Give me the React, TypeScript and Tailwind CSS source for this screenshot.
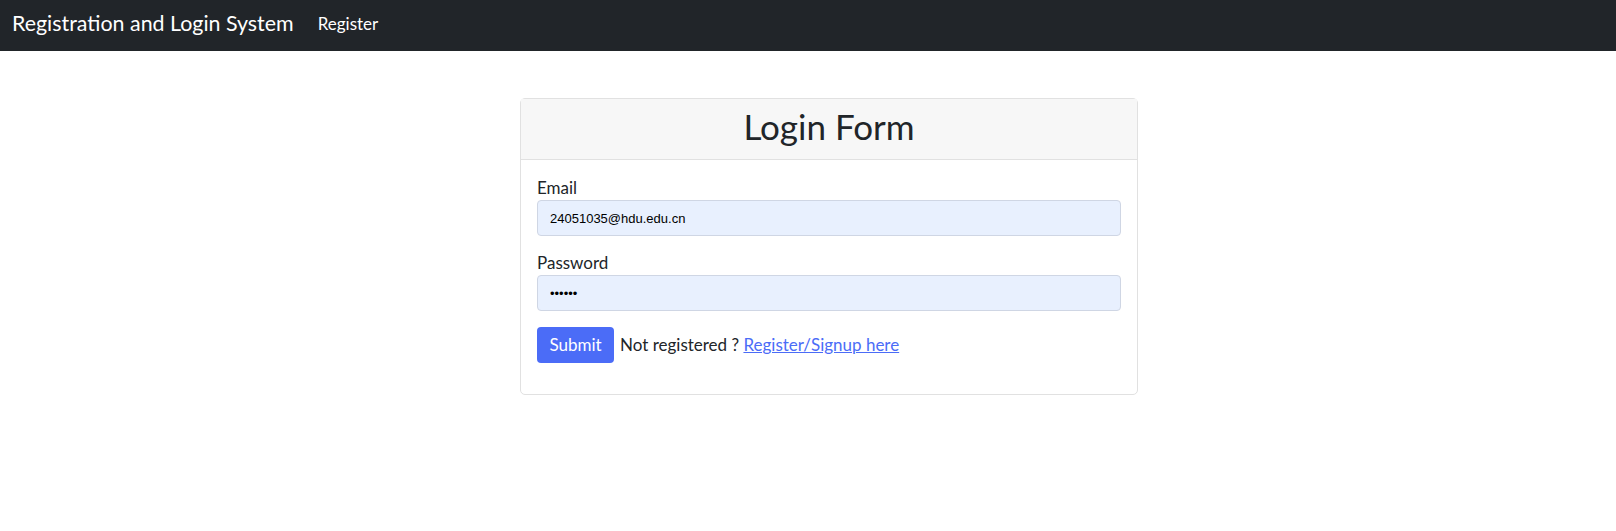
import React from 'react';

const font = { fontFamily: 'Lato, "Noto Sans", sans-serif' };

const Navbar: React.FC = () => (
  <nav className="flex h-[51px] items-center bg-[#212529] px-3 pb-[4px] text-white">
    <a href="#" className="mr-[24px] text-[21.4px] leading-none text-white">
      Registration and Login System
    </a>
    <a href="#" className="text-[17px] leading-none text-white">
      Register
    </a>
  </nav>
);

const Field: React.FC<{ label: string; type: string; value: string; last?: boolean }> = ({
  label,
  type,
  value,
  last,
}) => (
  <div className={last ? 'mb-4' : 'mb-[15px]'}>
    <label className="block text-[17px] leading-6 text-[#212529]">{label}</label>
    <input
      type={type}
      value={value}
      readOnly
      className="block h-[36px] w-full rounded-[4px] border border-[#cfd6e4] bg-[#e8f0fe] px-3 text-[13px] text-black outline-none"
      style={{ fontFamily: '"Liberation Sans", Arial, sans-serif' }}
    />
  </div>
);

export default function App() {
  return (
    <div className="min-h-screen bg-white text-[#212529]" style={font}>
      <Navbar />
      <div className="ml-[520px] mt-[47px] w-[618px] rounded-[5px] border border-[#e1e1e1]">
        <div className="flex h-[61px] items-center justify-center border-b border-[#e1e1e1] bg-[#f7f7f7] pb-[6px]">
          <h2 className="text-[35px] leading-none">Login Form</h2>
        </div>
        <div className="px-4 pb-[31px] pt-4">
          <Field label="Email" type="email" value="24051035@hdu.edu.cn" />
          <Field label="Password" type="password" value="123456" last />
          <div className="flex items-center gap-[6px]">
            <button
              type="button"
              className="h-[36px] w-[77px] rounded-[4px] bg-[#4b6cf7] text-[17px] text-white"
            >
              Submit
            </button>
            <span className="text-[17px]">
              Not registered ?{' '}
              <a href="#" className="text-[#4b6cf7] underline">
                Register/Signup here
              </a>
            </span>
          </div>
        </div>
      </div>
    </div>
  );
}
